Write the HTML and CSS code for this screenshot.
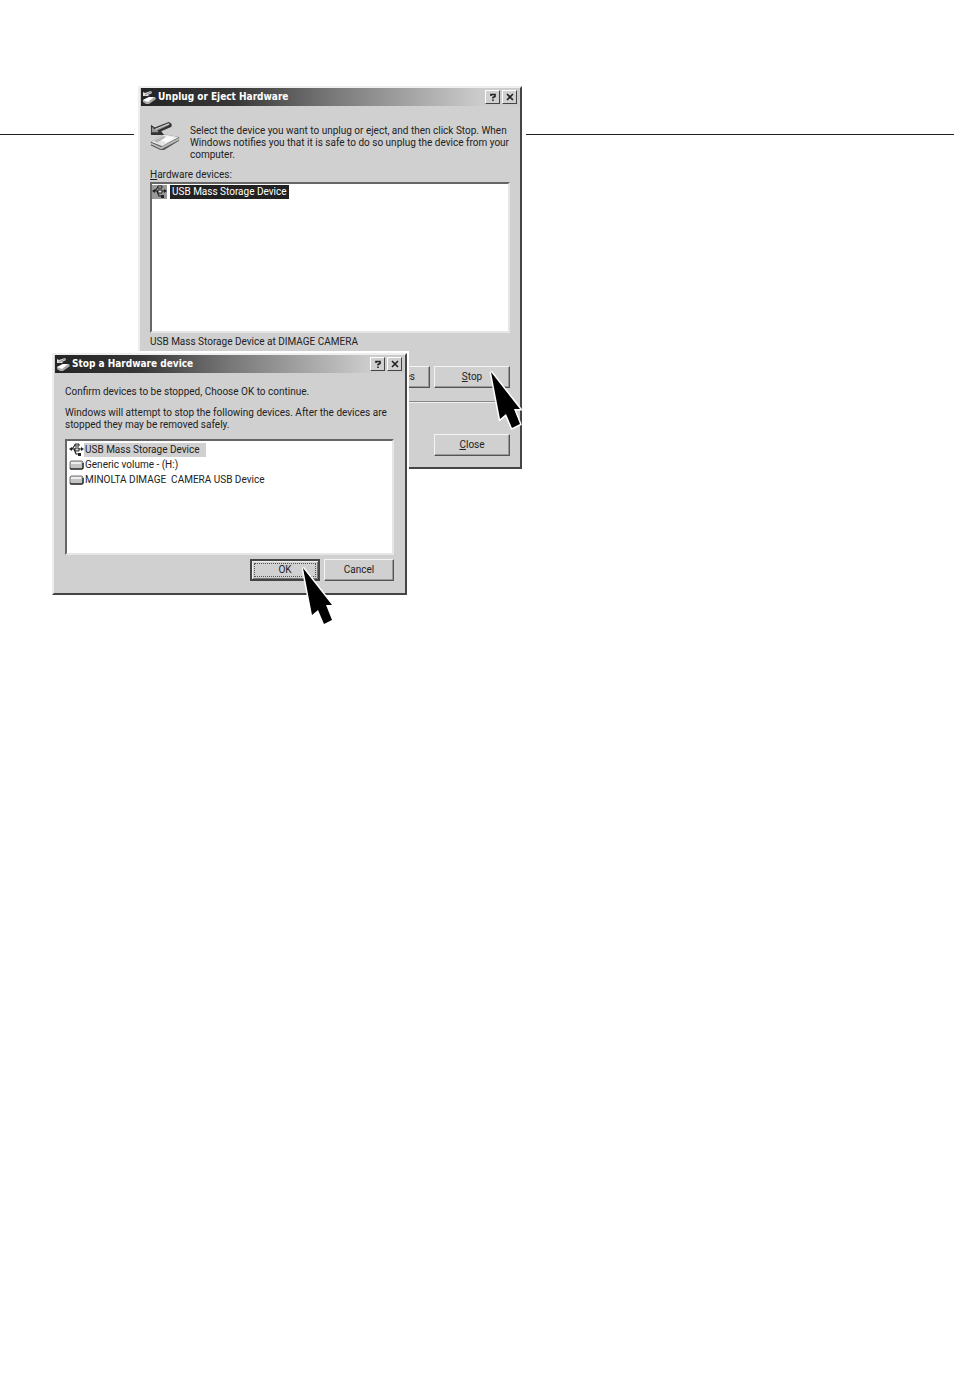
FILE: index.html
```
<!DOCTYPE html>
<html lang="en">
<head>
<meta charset="utf-8">
<title>Unplug or Eject Hardware</title>
<link rel="stylesheet" href="styles.css">
</head>
<body>
<svg class="defs" aria-hidden="true">
  <symbol id="eject" viewBox="0 0 32 32">
    <path d="M1 22 15 14 31 17 31 21 15 31 11 31 1 26Z" fill="#555"/>
    <path d="M1 22 15 14 31 17 13 27Z" fill="#e4e4e4"/>
    <path d="M10 20 19 16 27 18 17 23Z" fill="#fafafa"/>
    <path d="M4 21 14 16 17 17 8 23Z" fill="#b4b4b4"/>
    <path d="M1 24 12 29 31 19" fill="none" stroke="#bbb" stroke-width="2"/>
    <path d="M1 4 5 7 20 1 23 3 23 6 12 11 15 15 1 15Z" fill="#333"/>
    <path d="M2 6 5 9 20 2 21 4 8 10 9 12 2 12Z" fill="#999"/>
    <path d="M5 9 20 3" fill="none" stroke="#ddd"/>
  </symbol>
  <symbol id="eject-small" viewBox="0 0 14 14">
    <path d="M1 10 7 7 13 7 14 9 7 14 4 14 1 12Z" fill="#aaa"/>
    <path d="M1 10 7 7 12 7 6 12Z" fill="#fff"/>
    <path d="M1 2 3 3 9 1 10 3 6 5 7 6 1 6Z" fill="#ddd"/>
    <path d="M3 5 9 2" fill="none" stroke="#888"/>
  </symbol>
  <symbol id="usb" viewBox="0 0 15 14">
    <path d="M2 6H13M3 6 6 2H9M5 6 7 11H10" fill="none" stroke="currentColor" stroke-width="1.200"/>
    <path d="M0 6 3 4V8ZM12 4 15 6 12 8ZM9 10H12V13H9Z" fill="currentColor"/>
    <path d="M6 1H10V3H6ZM6 5H10V8H6Z" fill="#ddd" stroke="currentColor"/>
  </symbol>
  <symbol id="drive" viewBox="0 0 15 10">
    <path d="M2 1H13L14 2V8L13 9H2L1 8V2Z" fill="#c4c4c4" stroke="#777"/>
    <path d="M2 3H12" stroke="#eee" stroke-width="2"/>
    <path d="M1 8 2 9H13L14 8V3" fill="none" stroke="#333" stroke-width="1.500"/>
  </symbol>
  <symbol id="pointer" viewBox="0 0 36 62">
    <path d="M2 3 31 40 25 40 31 55 23 59 17 45 11 50Z" fill="#000" stroke="#fff" stroke-width="3" paint-order="stroke"/>
  </symbol>
</svg>
<main class="canvas">
  <hr class="rule">
  <section class="dialog dialog-eject" aria-labelledby="eject-title">
    <header class="titlebar">
      <svg class="title-icon"><use href="#eject-small"/></svg>
      <h1 class="title" id="eject-title">Unplug or Eject Hardware</h1>
      <button class="caption" type="button" aria-label="Help"><svg viewBox="0 0 8 8"><path d="M2 3V1.500H6V3.500L4 4.500V5.500M4 6.500V8" fill="none" stroke="#222" stroke-width="1.600"/></svg></button>
      <button class="caption" type="button" aria-label="Close window"><svg viewBox="0 0 8 8"><path d="M1 1 7 7M7 1 1 7" stroke="#222" stroke-width="1.600"/></svg></button>
    </header>
    <div class="eject-body">
      <div class="intro">
        <svg class="intro-icon"><use href="#eject"/></svg>
        <p class="text">Select the device you want to unplug or eject, and then click Stop. When<br>Windows notifies you that it is safe to do so unplug the device from your<br>computer.</p>
      </div>
      <p class="text list-label" id="devices-label"><u>H</u>ardware devices:</p>
      <ul class="list eject-list" role="listbox" aria-labelledby="devices-label">
        <li class="item active" role="option" aria-selected="true"><svg class="usb"><use href="#usb"/></svg><span class="item-name">USB Mass Storage Device</span></li>
      </ul>
      <p class="text status">USB Mass Storage Device at DIMAGE CAMERA</p>
      <div class="actions eject-actions">
        <button class="button" type="button"><u>P</u>roperties</button>
        <button class="button" type="button"><u>S</u>top</button>
      </div>
      <div class="actions eject-footer">
        <button class="button" type="button"><u>C</u>lose</button>
      </div>
    </div>
    <svg class="pointer pointer-stop" aria-hidden="true"><use href="#pointer"/></svg>
  </section>
  <section class="dialog dialog-stop" aria-labelledby="stop-title">
    <header class="titlebar">
      <svg class="title-icon"><use href="#eject-small"/></svg>
      <h2 class="title" id="stop-title">Stop a Hardware device</h2>
      <button class="caption" type="button" aria-label="Help"><svg viewBox="0 0 8 8"><path d="M2 3V1.500H6V3.500L4 4.500V5.500M4 6.500V8" fill="none" stroke="#222" stroke-width="1.600"/></svg></button>
      <button class="caption" type="button" aria-label="Close window"><svg viewBox="0 0 8 8"><path d="M1 1 7 7M7 1 1 7" stroke="#222" stroke-width="1.600"/></svg></button>
    </header>
    <div class="stop-body">
      <p class="text">Confirm devices to be stopped, Choose OK to continue.</p>
      <p class="text stop-note">Windows will attempt to stop the following devices. After the devices are<br>stopped they may be removed safely.</p>
      <ul class="list stop-list" role="listbox" aria-label="Devices to be stopped">
        <li class="item muted" role="option" aria-selected="true"><svg class="usb"><use href="#usb"/></svg><span class="item-name">USB Mass Storage Device</span></li>
        <li class="item" role="option"><svg class="drive"><use href="#drive"/></svg><span class="item-name">Generic volume - (H:)</span></li>
        <li class="item" role="option"><svg class="drive"><use href="#drive"/></svg><span class="item-name">MINOLTA DIMAGE&nbsp; CAMERA USB Device</span></li>
      </ul>
      <div class="actions stop-actions">
        <button class="button default" type="button"><span class="focus">OK</span></button>
        <button class="button" type="button">Cancel</button>
      </div>
    </div>
    <svg class="pointer pointer-ok" aria-hidden="true"><use href="#pointer"/></svg>
  </section>
</main>
</body>
</html>
```
FILE: styles.css
```
* { box-sizing: border-box; }
body {
  margin: 0;
  background: #fff;
  color: #222;
  font: 10px/12px Roboto, "Liberation Sans", sans-serif;
}
.defs { position: absolute; width: 0; height: 0; }
.canvas { position: relative; min-height: 100vh; padding-top: 134px; }
.rule { margin: 0; border: 0; border-top: 1px solid #222; }
.dialog {
  position: absolute;
  background: #d0d0d0;
  border: 2px solid;
  border-color: #eee #444 #444 #eee;
}
.dialog-eject { left: 138px; top: 86px; width: 384px; box-shadow: 0 0 0 4px #fff; }
.dialog-stop { left: 52px; top: 353px; width: 355px; box-shadow: 0 0 0 2px #fff; }
.titlebar {
  display: flex;
  align-items: center;
  height: 18px;
  margin: 0 1px;
  padding: 0 2px 0 1px;
  background: linear-gradient(90deg, #242424, #383838 25%, #777 50%, #ccc 90%);
}
.title-icon { width: 14px; height: 14px; margin-right: 2px; }
.title {
  flex: 1;
  margin: 0;
  color: #fff;
  font: bold 10px/14px "DejaVu Sans Condensed", "DejaVu Sans", sans-serif;
}
.caption {
  display: grid;
  place-items: center;
  width: 15px;
  height: 14px;
  padding: 0;
  margin-left: 2px;
  background: #d0d0d0;
  border: 1px solid;
  border-color: #fff #444 #444 #fff;
}
.caption svg { width: 8px; height: 8px; }
.text { margin: 0; }
.eject-body { padding: 12px 10px 11px; }
.intro { display: flex; gap: 10px; padding-top: 7px; }
.intro-icon { width: 30px; height: 32px; margin-top: -5px; }
.intro .text { flex: 1; }
.list-label { margin-top: 8px; margin-bottom: 1px; }
.list {
  margin: 0;
  padding: 0;
  list-style: none;
  background: #fff;
  border: 2px solid;
  border-color: #666 #e6e6e6 #e6e6e6 #666;
}
.eject-list { height: 151px; }
.stop-list { height: 116px; padding: 1px 2px; }
.item { display: flex; align-items: center; height: 15px; }
.item-name { line-height: 14px; padding: 0 1px; }
.usb { width: 15px; height: 14px; color: #222; }
.drive { width: 15px; height: 10px; }
.active .usb { background: #999; }
.active .item-name { margin-left: 3px; padding: 0 2px; background: #222; color: #fff; }
.muted .item-name { padding-right: 6px; background: #d0d0d0; }
.status { margin-top: 3px; }
.actions { display: flex; justify-content: flex-end; gap: 4px; }
.button {
  width: 76px;
  height: 22px;
  padding: 0;
  color: #222;
  font: inherit;
  background: #d0d0d0;
  border: 1px solid;
  border-color: #f4f4f4 #555 #555 #f4f4f4;
  box-shadow: inset -1px -1px #999;
}
.eject-actions { margin-top: 18px; padding-bottom: 13px; border-bottom: 1px solid #888; }
.eject-footer { padding-top: 31px; border-top: 1px solid #eee; }
.stop-body { padding: 13px 11px 12px; }
.stop-note { margin: 9px 0 8px; }
.stop-actions { margin-top: 4px; }
.stop-actions .button { width: 70px; }
.default { padding: 2px; border: 2px solid; border-color: #444; box-shadow: inset 1px 1px #eee, inset -1px -1px #777; }
.focus { display: grid; place-items: center; height: 100%; border: 1px dotted #555; }
.pointer { position: absolute; width: 36px; height: 62px; }
.pointer-stop { left: 349px; top: 281px; }
.pointer-ok { left: 247px; top: 210px; }
```
